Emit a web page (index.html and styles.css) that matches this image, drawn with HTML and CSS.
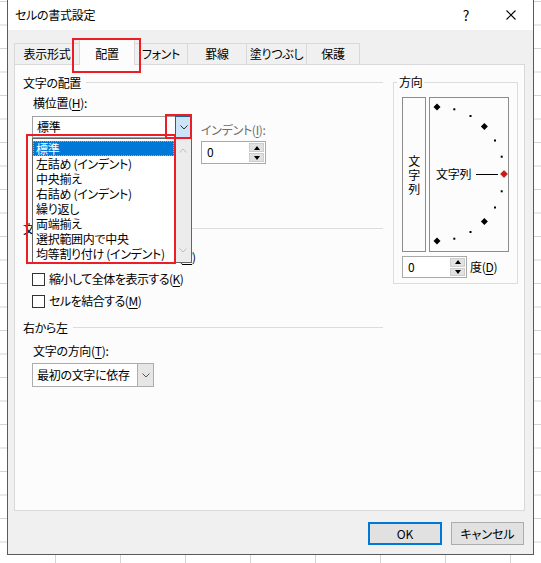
FILE: index.html
```html
<!DOCTYPE html>
<html lang="ja">
<head>
    <meta charset="UTF-8">
    <title>セルの書式設定</title>
    <link rel="stylesheet" href="styles.css">
</head>
<body>
    <div class="dialog">
        <div class="titlebar">
            <span class="title">セルの書式設定</span>
            <span class="help">?</span>
            <svg class="close" width="10" height="10" viewBox="0 0 10 10"><path d="M0.5 0.5 L9.5 9.5 M9.5 0.5 L0.5 9.5" stroke="#000" stroke-width="1.1" fill="none"/></svg>
        </div>

        <div class="tabs">
            <div class="tab w1">表示形式</div>
            <div class="tab active w2">配置</div>
            <div class="tab w3">フォント</div>
            <div class="tab w4">罫線</div>
            <div class="tab w5">塗りつぶし</div>
            <div class="tab w6">保護</div>
        </div>

        <div class="panel">
            <div class="left">
                <div class="group-head"><span>文字の配置</span><i></i></div>
                <div class="label-sub">横位置(<u>H</u>):</div>
                <div class="h-row">
                    <div class="combo">
                        <span class="combo-text">標準</span>
                        <span class="combo-btn open">
                            <svg width="8" height="5" viewBox="0 0 8 5"><path d="M0.5 0.5 L4 4 L7.5 0.5" fill="none" stroke="#333"/></svg>
                        </span>
                        <div class="droplist">
                            <ul class="items">
                                <li class="sel">標準</li>
                                <li>左詰め (インデント)</li>
                                <li>中央揃え</li>
                                <li>右詰め (インデント)</li>
                                <li>繰り返し</li>
                                <li>両端揃え</li>
                                <li>選択範囲内で中央</li>
                                <li>均等割り付け (インデント)</li>
                            </ul>
                            <div class="sbar">
                                <svg width="8" height="5" viewBox="0 0 8 5"><path d="M0.5 4.5 L4 1 L7.5 4.5" fill="none" stroke="#bdbdbd"/></svg>
                                <svg width="8" height="5" viewBox="0 0 8 5"><path d="M0.5 0.5 L4 4 L7.5 0.5" fill="none" stroke="#bdbdbd"/></svg>
                            </div>
                        </div>
                    </div>
                    <div class="indent">
                        <div class="label-dis">インデント(<u>I</u>):</div>
                        <div class="spin">
                            <span class="spin-val">0</span>
                            <span class="spin-btns"><span class="up"></span><span class="down"></span></span>
                        </div>
                    </div>
                </div>

                <div class="group-head ctrl-head"><span>文字の制御</span><i></i></div>
                <div class="check first"><span class="box"></span>折り返して全体を表示する(<u>W</u>)</div>
                <div class="check"><span class="box"></span>縮小して全体を表示する(<u>K</u>)</div>
                <div class="check"><span class="box"></span>セルを結合する(<u>M</u>)</div>

                <div class="group-head rtl-head"><span>右から左</span><i></i></div>
                <div class="label-sub dir-label">文字の方向(<u>T</u>):</div>
                <div class="combo combo-dir">
                    <span class="combo-text">最初の文字に依存</span>
                    <span class="combo-btn">
                        <svg width="8" height="5" viewBox="0 0 8 5"><path d="M0.5 0.5 L4 4 L7.5 0.5" fill="none" stroke="#555"/></svg>
                    </span>
                </div>
            </div>

            <fieldset class="orient">
                <legend>方向</legend>
                <div class="orient-boxes">
                    <div class="vtext"><span>文</span><span>字</span><span>列</span></div>
                    <div class="arc">
                        <svg width="78" height="153" viewBox="0 0 78 153">
                            <g fill="#000">
                                <polygon points="7,5.5 10.5,9 7,12.5 3.5,9"/>
                                <rect x="23.3" y="10.3" width="2" height="2"/>
                                <rect x="39.5" y="17" width="2" height="2"/>
                                <polygon points="54.4,25.1 57.9,28.6 54.4,32.1 50.9,28.6"/>
                                <rect x="64" y="41.5" width="2" height="2"/>
                                <rect x="70.7" y="57.7" width="2" height="2"/>
                                <rect x="70.7" y="92.3" width="2" height="2"/>
                                <rect x="64" y="108.5" width="2" height="2"/>
                                <polygon points="54.4,119.9 57.9,123.4 54.4,126.9 50.9,123.4"/>
                                <rect x="39.5" y="133" width="2" height="2"/>
                                <rect x="23.3" y="139.7" width="2" height="2"/>
                                <polygon points="7,139.5 10.5,143 7,146.5 3.5,143"/>
                            </g>
                            <line x1="46" y1="76.5" x2="68" y2="76.5" stroke="#000" stroke-width="1"/>
                            <polygon points="74,72.5 77.5,76 74,79.5 70.5,76" fill="#e01010" stroke="#600" stroke-width="0.5"/>
                            <text x="6" y="81" font-size="12" class="arc-text">文字列</text>
                        </svg>
                    </div>
                </div>
                <div class="deg-row">
                    <div class="spin spin-deg">
                        <span class="spin-val">0</span>
                        <span class="spin-btns"><span class="up"></span><span class="down"></span></span>
                    </div>
                    <span class="deg-label">度(<u>D</u>)</span>
                </div>
            </fieldset>
        </div>

        <div class="buttons">
            <button class="btn btn-ok">OK</button>
            <button class="btn btn-cancel">キャンセル</button>
        </div>
    </div>

    <div class="mark mark-tab"></div>
    <div class="mark mark-btn"></div>
    <div class="mark mark-list"></div>
</body>
</html>
```

FILE: styles.css
```css
* {
    box-sizing: border-box;
}
body {
    margin: 0;
    width: 541px;
    height: 563px;
    overflow: hidden;
    font-family: "Noto Sans CJK JP", "Noto Sans", sans-serif;
    font-size: 12px;
    line-height: 16px;
    letter-spacing: -0.3px;
    color: #000;
    font-feature-settings: "palt";
    background-color: #fff;
    background-image: linear-gradient(to right, #d4d4d4 1px, transparent 1px),
                      linear-gradient(to bottom, #d4d4d4 1px, transparent 1px);
    background-size: 65px 100%, 100% 23.5px;
    background-position: 55px 0, 0 1px;
}
u {
    text-decoration-thickness: 1px;
    text-underline-offset: 2px;
}
.dialog {
    margin-left: 7px;
    width: 527px;
    height: 555px;
    border: 1px solid #5a5a5a;
    border-top: none;
    background: #f0f0f0;
}
.titlebar {
    height: 30px;
    background: #fff;
    display: flex;
    align-items: center;
    padding-left: 7px;
}
.title {
    flex: 1;
}
.help {
    width: 20px;
    text-align: center;
    font-size: 14px;
    margin-right: 30px;
}
.close {
    margin-right: 17px;
}

/* tabs */
.tabs {
    display: flex;
    align-items: flex-end;
    height: 25px;
    margin: 9px 0 0 6px;
}
.tab {
    height: 21px;
    line-height: 20px;
    text-align: center;
    border: 1px solid #d9d9d9;
    border-bottom: none;
    background: #f0f0f0;
    margin-left: -1px;
}
.tab.w1 { width: 66px; margin-left: 0; }
.tab.w2 { width: 56px; }
.tab.w3 { width: 54px; }
.tab.w4 { width: 60px; }
.tab.w5 { width: 61px; }
.tab.w6 { width: 54px; }
.tab.active {
    height: 26px;
    margin-bottom: -1px;
    padding-top: 6px;
    line-height: 16px;
    background: #fcfcfc;
    position: relative;
    z-index: 1;
}

/* panel */
.panel {
    margin-left: 6px;
    width: 511px;
    height: 447px;
    border: 1px solid #d9d9d9;
    background: #fcfcfc;
    display: flex;
    align-items: flex-start;
    padding: 9px 0 0 8px;
}
.left {
    width: 360px;
    margin-top: 1px;
}
.group-head {
    display: flex;
    align-items: center;
    height: 16px;
}
.group-head i {
    flex: 1;
    height: 1px;
    background: #dcdcdc;
    margin: -2px 0 0 5px;
}
.label-sub {
    margin: 4px 0 0 10px;
}
.label-dis {
    color: #6d6d6d;
}
.h-row {
    display: flex;
    align-items: flex-start;
    margin: 5px 0 0 9px;
}

/* combo boxes */
.combo {
    position: relative;
    display: flex;
    align-items: center;
    width: 160px;
    height: 22px;
    border: 1px solid #a0a0a0;
    background: #fff;
}
.combo-text {
    flex: 1;
    padding-left: 4px;
}
.combo-btn {
    align-self: stretch;
    width: 17px;
    margin: -1px -1px -1px 0;
    display: flex;
    align-items: center;
    justify-content: center;
}
.combo-btn.open {
    background: #cce4f7;
    border: 1px solid #1f5f95;
}
.droplist {
    position: absolute;
    left: -1px;
    top: 21px;
    width: 160px;
    height: 125px;
    border: 1px solid #646464;
    background: #fff;
    display: flex;
    z-index: 2;
}
.items {
    flex: 1;
    list-style: none;
    margin: 0;
    padding: 2px 0 0;
}
.items li {
    height: 15px;
    line-height: 15px;
    padding-left: 3px;
    white-space: nowrap;
}
.items li.sel {
    background: #0078d7;
    color: #fff;
    outline: 1px dotted #f0a030;
    outline-offset: -1px;
}
.sbar {
    width: 17px;
    background: #ececec;
    display: flex;
    flex-direction: column;
    align-items: center;
    justify-content: space-between;
    padding: 9px 0 9px;
}
.combo-dir {
    margin: 4px 0 0 9px;
    width: 122px;
    height: 24px;
    border-color: #adadad;
}
.combo-dir .combo-btn {
    background: #e6e6e6;
    border: 1px solid #adadad;
}

/* spin boxes */
.indent {
    margin: 6px 0 0 9px;
}
.spin {
    display: flex;
    width: 65px;
    height: 23px;
    margin-top: 3px;
    border: 1px solid #a9a9a9;
    background: #fff;
}
.spin-deg {
    height: 22px;
    margin-top: 0;
}
.spin-val {
    flex: 1;
    padding-left: 5px;
    line-height: 20px;
}
.spin-btns {
    width: 16px;
    display: flex;
    flex-direction: column;
    padding: 1px 1px 1px 0;
    gap: 1px;
}
.spin-btns span {
    flex: 1;
    background: #e1e1e1;
    border: 1px solid #cdcdcd;
    display: flex;
    align-items: center;
    justify-content: center;
}
.spin-btns .up::after {
    content: "";
    border-left: 3px solid transparent;
    border-right: 3px solid transparent;
    border-bottom: 4px solid #000;
}
.spin-btns .down::after {
    content: "";
    border-left: 3px solid transparent;
    border-right: 3px solid transparent;
    border-top: 4px solid #000;
}

/* checkboxes */
.ctrl-head {
    margin-top: 57px;
}
.check {
    display: flex;
    align-items: center;
    height: 22px;
    padding-left: 9px;
    white-space: nowrap;
    letter-spacing: -0.5px;
}
.check.first {
    margin-top: 9px;
}
.box {
    width: 13px;
    height: 13px;
    border: 1px solid #333;
    background: #fff;
    margin-right: 4px;
}
.rtl-head {
    margin-top: 8px;
}
.dir-label {
    margin-top: 7px;
}

/* orientation group */
.orient {
    margin: 0 0 0 10px;
    width: 125px;
    min-width: 0;
    padding: 7px 8px 5px;
    border: 1px solid #dcdcdc;
}
.orient legend {
    padding: 0 2px;
    margin-left: -5px;
    line-height: 16px;
}
.orient-boxes {
    display: flex;
    gap: 3px;
    height: 155px;
}
.vtext {
    width: 24px;
    border: 1px solid #8c8c8c;
    display: flex;
    flex-direction: column;
    align-items: center;
    justify-content: center;
    line-height: 14px;
}
.arc {
    width: 80px;
    border: 1px solid #8c8c8c;
}
.arc svg {
    display: block;
}
.arc-text {
    font-family: "Noto Sans CJK JP", sans-serif;
}
.deg-row {
    display: flex;
    align-items: center;
    margin-top: 4px;
}
.deg-label {
    margin-left: 3px;
}

/* buttons */
.buttons {
    display: flex;
    justify-content: flex-end;
    gap: 9px;
    margin-top: 11px;
    padding-right: 9px;
}
.btn {
    height: 23px;
    background: #e1e1e1;
    border: 1px solid #adadad;
    font: inherit;
    color: #000;
    padding: 0;
}
.btn-ok {
    width: 74px;
    border: 2px solid #0078d7;
}
.btn-cancel {
    width: 73px;
}

/* red annotation frames */
.mark {
    position: absolute;
    border: 2px solid #ee1c25;
    z-index: 5;
}
.mark-tab {
    left: 72px;
    top: 38px;
    width: 69px;
    height: 35px;
}
.mark-btn {
    left: 165px;
    top: 114px;
    width: 27px;
    height: 25px;
}
.mark-list {
    left: 26px;
    top: 134px;
    width: 150px;
    height: 130px;
}
```
